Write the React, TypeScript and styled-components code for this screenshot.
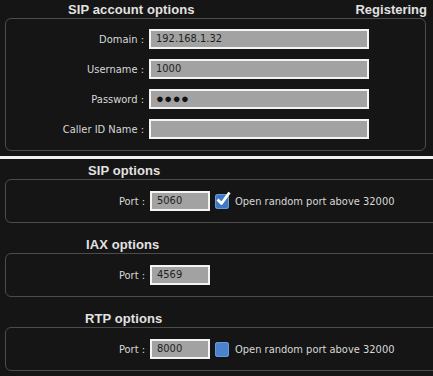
import styled, { createGlobalStyle } from "styled-components";

const GlobalStyle = createGlobalStyle`
  html, body {
    margin: 0;
    padding: 0;
    background: #151515;
    overflow: hidden;
  }
  body {
    font-family: "Liberation Sans", Arial, sans-serif;
    color: #dcdcdc;
  }
`;

const Page = styled.div`
  width: 433px;
  height: 376px;
  overflow: hidden;
  background: #151515;
`;

const Section = styled.section<{ $top?: number }>`
  margin-top: ${(p) => p.$top ?? 0}px;
`;

const TitleRow = styled.div<{ $indent: number }>`
  display: flex;
  justify-content: space-between;
  align-items: center;
  height: 18px;
  padding-left: ${(p) => p.$indent}px;
  padding-right: 6px;
`;

const Title = styled.h2`
  margin: 0;
  font-size: 13px;
  font-weight: bold;
  color: #e2e2e2;
  letter-spacing: 0.1px;
`;

const Status = styled.span`
  font-size: 13px;
  font-weight: bold;
  color: #e2e2e2;
`;

const Box = styled.div<{ $wide?: boolean }>`
  margin-left: 5px;
  margin-right: ${(p) => (p.$wide ? "-20px" : "7px")};
  border: 1px solid #4c4c4c;
  border-radius: 6px;
  padding: ${(p) => (p.$wide ? "11px 0" : "10px 0 11px")};
  display: flex;
  flex-direction: column;
  gap: 10px;
`;

const Row = styled.div`
  display: flex;
  align-items: center;
  height: 20px;
`;

const Label = styled.label<{ $width: number }>`
  width: ${(p) => p.$width}px;
  padding-right: 5px;
  box-sizing: border-box;
  text-align: right;
  font-family: "DejaVu Sans Condensed", "Liberation Sans", sans-serif;
  font-size: 11px;
  color: #d8d8d8;
  white-space: nowrap;
`;

const Field = styled.div<{ $width: number }>`
  box-sizing: border-box;
  width: ${(p) => p.$width}px;
  height: 20px;
  border: 2px solid #f4f4f4;
  background: #a2a2a2;
  color: #1e1e1e;
  font-family: "DejaVu Sans Condensed", "Liberation Sans", sans-serif;
  font-size: 11px;
  line-height: 16px;
  padding-left: 5px;
  white-space: nowrap;
`;

const Dots = styled.span`
  font-family: "Liberation Sans", sans-serif;
  font-size: 13px;
  letter-spacing: 0.5px;
  color: #111;
`;

const Check = styled.span<{ $checked?: boolean }>`
  display: inline-flex;
  width: 14px;
  height: 15px;
  margin-left: 5px;
  border-radius: 3px;
  background: ${(p) => (p.$checked ? "#3f79c4" : "#4a82cc")};
  box-shadow: inset 0 0 0 1px #6a9ad8;
  position: relative;
`;

const CheckText = styled.span`
  margin-left: 6px;
  font-family: "DejaVu Sans Condensed", "Liberation Sans", sans-serif;
  font-size: 11px;
  color: #d8d8d8;
  white-space: nowrap;
`;

const Divider = styled.div`
  height: 3px;
  background: #f2f2f2;
  margin-top: 5px;
  margin-bottom: 2px;
`;

const Tick = () => (
  <svg width="16" height="17" viewBox="0 0 16 17" style={{ position: "absolute", left: 0, top: -4 }}>
    <path d="M2.5 9.5 L6.5 13.5 L14.5 2.5" fill="none" stroke="#fff" strokeWidth="2.8" strokeLinejoin="round" />
  </svg>
);

function PortRow({ port, random }: { port: string; random?: "on" | "off" }) {
  return (
    <Row>
      <Label $width={144}>Port :</Label>
      <Field $width={60}>{port}</Field>
      {random && (
        <>
          <Check $checked={random === "on"}>{random === "on" && <Tick />}</Check>
          <CheckText>Open random port above 32000</CheckText>
        </>
      )}
    </Row>
  );
}

export default function App() {
  return (
    <>
      <GlobalStyle />
      <Page>
        <Section>
          <TitleRow $indent={68}>
            <Title>SIP account options</Title>
            <Status>Registering</Status>
          </TitleRow>
          <Box>
            <Row>
              <Label $width={143}>Domain :</Label>
              <Field $width={220}>192.168.1.32</Field>
            </Row>
            <Row>
              <Label $width={143}>Username :</Label>
              <Field $width={220}>1000</Field>
            </Row>
            <Row>
              <Label $width={143}>Password :</Label>
              <Field $width={220}>
                <Dots>●●●●</Dots>
              </Field>
            </Row>
            <Row>
              <Label $width={143}>Caller ID Name :</Label>
              <Field $width={220} />
            </Row>
          </Box>
        </Section>
        <Divider />
        <Section>
          <TitleRow $indent={88}>
            <Title>SIP options</Title>
          </TitleRow>
          <Box $wide>
            <PortRow port="5060" random="on" />
          </Box>
        </Section>
        <Section $top={12}>
          <TitleRow $indent={86}>
            <Title>IAX options</Title>
          </TitleRow>
          <Box $wide>
            <PortRow port="4569" />
          </Box>
        </Section>
        <Section $top={12}>
          <TitleRow $indent={85}>
            <Title>RTP options</Title>
          </TitleRow>
          <Box $wide>
            <PortRow port="8000" random="off" />
          </Box>
        </Section>
      </Page>
    </>
  );
}
